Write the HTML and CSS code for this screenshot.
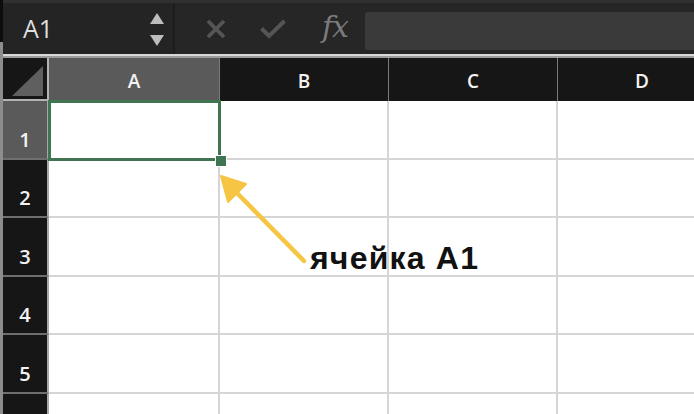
FILE: index.html
```html
<!DOCTYPE html>
<html lang="ru">
<head>
  <meta charset="UTF-8" />
  <title>Ячейка A1</title>
  <link rel="stylesheet" href="styles.css">
</head>
<body>
  <div class="app">
    <div class="edge"></div>

    <div class="main">
      <!-- formula bar -->
      <div class="formula-bar">
        <div class="name-box">
          <span class="cell-ref">A1</span>
          <div class="spin">
            <svg width="14" height="12" viewBox="0 0 14 12"><path d="M7 0 L14 11 L0 11 Z" fill="#bdbdbd"/></svg>
            <svg width="14" height="12" viewBox="0 0 14 12"><path d="M0 1 L14 1 L7 12 Z" fill="#bdbdbd"/></svg>
          </div>
        </div>
        <div class="fb-actions">
          <svg class="fb-icon" width="20" height="20" viewBox="0 0 20 20">
            <path d="M2 2 L18 18 M18 2 L2 18" stroke="#555555" stroke-width="3.8" fill="none"/>
          </svg>
          <svg class="fb-icon" width="26" height="20" viewBox="0 0 26 20">
            <path d="M1.5 9.5 L9 17 L24.5 2" stroke="#555555" stroke-width="4" fill="none"/>
          </svg>
          <span class="fx">fx</span>
        </div>
        <div class="formula-input"></div>
      </div>
      <div class="bar-sep"></div>

      <!-- sheet -->
      <div class="sheet">
        <div class="grid">
          <div class="corner">
            <svg width="31" height="30" viewBox="0 0 31 30"><path d="M31 0 L31 30 L0 30 Z" fill="#5f5f5f"/></svg>
          </div>
          <div class="col-head selected">A</div>
          <div class="col-head">B</div>
          <div class="col-head">C</div>
          <div class="col-head">D</div>

          <div class="row-head selected">1</div>
          <div class="cell"></div><div class="cell"></div><div class="cell"></div><div class="cell"></div>
          <div class="row-head">2</div>
          <div class="cell"></div><div class="cell"></div><div class="cell"></div><div class="cell"></div>
          <div class="row-head">3</div>
          <div class="cell"></div><div class="cell"></div><div class="cell"></div><div class="cell"></div>
          <div class="row-head">4</div>
          <div class="cell"></div><div class="cell"></div><div class="cell"></div><div class="cell"></div>
          <div class="row-head">5</div>
          <div class="cell"></div><div class="cell"></div><div class="cell"></div><div class="cell"></div>
          <div class="row-head"></div>
          <div class="cell"></div><div class="cell"></div><div class="cell"></div><div class="cell"></div>
        </div>

        <div class="selection"><span class="handle"></span></div>

        <svg class="pointer" width="120" height="110" viewBox="0 0 120 110">
          <line x1="102" y1="89" x2="32" y2="18" stroke="#f5c543" stroke-width="4.5" stroke-linecap="round"/>
          <path d="M19 4 L44 12 L26 30 Z" fill="#f5c543" stroke="#f5c543" stroke-width="2" stroke-linejoin="round"/>
        </svg>
        <div class="callout">ячейка A1</div>
      </div>
    </div>
  </div>
</body>
</html>
```

FILE: styles.css
```css
body {
  margin: 0;
  background: #ffffff;
  font-family: 'Open Sans', 'Noto Sans', sans-serif;
  overflow: hidden;
}

.app {
  display: flex;
  height: 414px;
  overflow: hidden;
}

/* thin strip of the window behind, on the left */
.edge {
  width: 3px;
  flex: none;
  background: linear-gradient(#0c0c0c 0 42px, #8d8d8d 42px);
}

.main {
  flex: 1;
  min-width: 0;
  overflow: hidden;
}

/* Formula bar */
.formula-bar {
  display: flex;
  align-items: center;
  height: 51px;
  background: #262626;
  border-top: 3px solid #303030;
}

.name-box {
  box-sizing: border-box;
  display: flex;
  align-items: center;
  justify-content: space-between;
  width: 172px;
  height: 100%;
  padding: 0 9px 0 20px;
  background: #242424;
  border-right: 2px solid #1d1d1d;
}

.cell-ref {
  color: #dedede;
  font-size: 25px;
  margin-top: -1px;
}

.spin {
  display: flex;
  flex-direction: column;
  gap: 9px;
  padding-top: 1px;
}

.spin svg {
  display: block;
}

.fb-actions {
  box-sizing: border-box;
  display: flex;
  align-items: center;
  gap: 34px;
  padding-left: 31px;
  width: 190px;
}

.fx {
  font-family: 'DejaVu Serif', 'Liberation Serif', serif;
  font-style: italic;
  font-size: 30px;
  color: #7b7b7b;
  letter-spacing: -1px;
  margin-left: 2px;
  margin-top: -4px;
}

.formula-input {
  flex: 1;
  height: 38px;
  margin-top: 4px;
  background: #3a3a3a;
  border-radius: 3px 0 0 3px;
}

.bar-sep {
  height: 4px;
  background: linear-gradient(#d9d9d9 0 2px, #9c9c9c 2px);
}

/* Sheet */
.sheet {
  position: relative;
}

.grid {
  display: grid;
  grid-template-columns: 46px 171px 169px 169px 169px;
  grid-template-rows: 43px repeat(6, 58.5px);
}

.corner {
  display: flex;
  align-items: flex-end;
  justify-content: flex-end;
  padding: 0 3px 3px 0;
  background: #161616;
  border-right: 2px solid #b3b3b3;
  border-bottom: 2px solid #b3b3b3;
}

.corner svg {
  display: block;
  margin-right: 1px;
}

.col-head {
  display: flex;
  align-items: center;
  justify-content: center;
  background: #161616;
  border-right: 1px solid #7a7a7a;
  color: #f2f2f2;
  font-size: 19px;
  font-weight: 600;
  padding-top: 2px;
}

.row-head {
  display: flex;
  align-items: center;
  justify-content: center;
  background: #161616;
  border-right: 2px solid #a8a8a8;
  border-bottom: 2px solid #6e6e6e;
  color: #f2f2f2;
  font-size: 20px;
  font-weight: 600;
  padding-top: 20px;
}

.col-head.selected,
.row-head.selected {
  background: #5a5a5a;
}

.cell {
  border-right: 2px solid #d5d5d5;
  border-bottom: 2px solid #d5d5d5;
}

/* Selected cell frame and fill handle */
.selection {
  position: absolute;
  left: 45px;
  top: 42px;
  width: 167px;
  height: 55px;
  border: 3px solid #3f7651;
}

.handle {
  position: absolute;
  right: -9px;
  bottom: -9px;
  width: 10px;
  height: 10px;
  background: #3f7651;
  border: 1px solid #ffffff;
}

.pointer {
  position: absolute;
  left: 199px;
  top: 114px;
}

.callout {
  position: absolute;
  left: 307px;
  top: 182px;
  font-family: 'Liberation Sans', Arial, sans-serif;
  font-weight: bold;
  font-size: 32px;
  letter-spacing: 1.2px;
  color: #111111;
  white-space: nowrap;
}
```
